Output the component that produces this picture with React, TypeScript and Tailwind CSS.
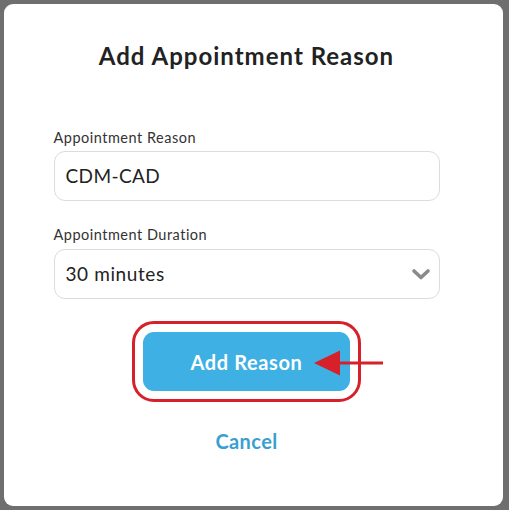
import React from "react";

const font = { fontFamily: "Lato, 'Open Sans', sans-serif" };

export default function App() {
  return (
    <div className="w-[509px] h-[510px] bg-[#6f6f6f] p-[4px] pr-[6px] pb-[4px]" style={font}>
      <div className="h-full w-full rounded-[9px] bg-white flex flex-col items-center">
        <div className="mr-[14px] flex flex-col items-center">
          {/* Title */}
          <h1 className="mt-[37px] text-[24px] leading-[30px] font-bold text-[#222] tracking-[1px]">Add Appointment Reason</h1>

          {/* Fields */}
          <div className="mt-[58px] w-[386px] flex flex-col">
            <label className="text-[14.5px] text-[#333] leading-[18px] tracking-[0.5px]">Appointment Reason</label>
            <div className="mt-[4px] h-[50px] rounded-[11px] border border-[#dcdcdc] flex items-center px-[11px] text-[19px] tracking-[0.4px] text-[#222]">
              CDM-CAD
            </div>

            <label className="mt-[25px] text-[14.5px] text-[#333] leading-[18px] tracking-[0.5px]">Appointment Duration</label>
            <div className="mt-[5px] h-[50px] rounded-[11px] border border-[#dcdcdc] flex items-center justify-between pl-[11px] pr-[8px] text-[19px] tracking-[0.6px] text-[#222]">
              <span>30 minutes</span>
              <svg width="20" height="14" viewBox="0 0 20 14">
                <path d="M3 4 L10 10.5 L17 4" fill="none" stroke="#8a8a8a" strokeWidth="3.6" strokeLinecap="round" strokeLinejoin="round" />
              </svg>
            </div>
          </div>

          {/* Button with annotation */}
          <div className="relative mt-[22px] rounded-[22px] border-[3px] border-[#d6202a] p-[8px]">
            <button className="w-[207px] h-[59px] rounded-[11px] bg-[#3eb0e4] text-white text-[20px] font-bold tracking-[0.6px]">
              Add Reason
            </button>
            <svg className="absolute left-[179px] top-[25px]" width="72" height="30" viewBox="0 0 72 30">
              <polygon points="0,14 26,1.5 26,26.5" fill="#d6202a" />
              <rect x="24" y="12.5" width="45" height="3" fill="#d6202a" />
            </svg>
          </div>

          <button className="mt-[24px] text-[20px] font-bold tracking-[0.4px] text-[#3a9fd0]">Cancel</button>
        </div>
      </div>
    </div>
  );
}
